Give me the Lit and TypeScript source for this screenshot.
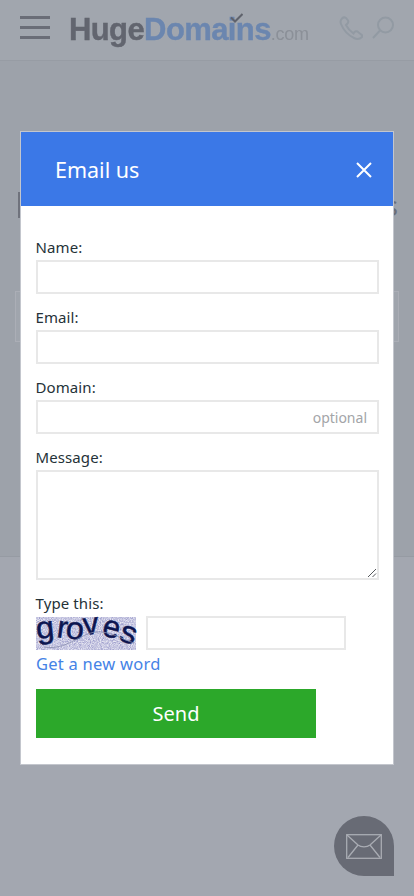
import { LitElement, html, css, svg } from "lit";
import { customElement } from "lit/decorators.js";

const letters = [
  { c: "g", x: 1, y: 22, r: -6, sx: 1.05 },
  { c: "r", x: 20, y: 20, r: 8, sx: 1.0 },
  { c: "o", x: 29, y: 21, r: 6, sx: 1.05 },
  { c: "v", x: 48, y: 18, r: -6, sx: 1.0 },
  { c: "e", x: 65, y: 18, r: 14, sx: 1.0 },
  { c: "s", x: 82, y: 23, r: 18, sx: 1.05 },
];

@customElement("app-root")
export class AppRoot extends LitElement {
  static styles = css`
    :host {
      display: block;
      position: relative;
      width: 414px;
      height: 896px;
      overflow: hidden;
      background: #a3a7b0;
      font-family: "Noto Sans", "Open Sans", sans-serif;
    }
    .page { display: flex; flex-direction: column; height: 896px; }
    .topbar {
      height: 61px;
      flex: none;
      display: flex;
      align-items: center;
      padding: 0 20px;
      box-sizing: border-box;
      background: #a1a6ae;
      border-bottom: 1px solid #979ca4;
    }
    .burger { width: 30px; height: 23px; flex: none; display: flex; flex-direction: column; justify-content: space-between; margin-top: -5px; }
    .burger i { display: block; height: 3px; background: #6a6d77; }
    .logo {
      position: relative;
      margin-left: 19px;
      width: 241px;
      flex: none;
      font-family: "Liberation Sans", Arial, sans-serif;
      font-size: 31px;
      line-height: 40px;
      font-weight: 700;
      letter-spacing: -0.6px;
      white-space: nowrap;
      -webkit-text-stroke: 0.4px currentColor;
      filter: blur(0.35px);
      margin-top: 3px;
    }
    .huge { color: #62656f; }
    .dom { color: #6b86af; }
    .com { color: #8b9098; font-weight: 400; font-size: 18px; letter-spacing: -0.3px; -webkit-text-stroke: 0; }
    .check { position: absolute; left: 161px; top: 3px; width: 13px; height: 10px; }
    .hicons { margin-left: 29px; display: flex; gap: 9px; align-items: center; margin-top: -5px; }
    .main { flex: 1; background: #9da2aa; position: relative; display: flex; flex-direction: column; }
    .ghost-title { height: 28px; margin: 131px 17px 0 18px; display: flex; justify-content: space-between; color: #6b6e78; }
    .ghost-title b { width: 2px; height: 26px; background: #6f727c; }
    .ghost-title span { font-size: 27px; line-height: 28px; margin-right: -1px; }
    .ghost-field { height: 49px; margin: 71px 15px 0; border: 1px solid #abaeb6; background: #a0a5ad; }
    .ghost-line { margin-top: 214px; height: 1px; background: #969ba3; }
    .bottom { flex: 1; background: #a3a7b0; }
    .chat {
      position: absolute;
      left: 334px;
      top: 816px;
      width: 60px;
      height: 60px;
      background: #686b75;
      border-radius: 50% 50% 0 50%;
      display: flex;
      align-items: center;
      justify-content: center;
    }
    .modal {
      position: absolute;
      left: 20px;
      top: 131px;
      width: 374px;
      box-sizing: border-box;
      border: 1px solid #c3c6cd;
      background: #fff;
      color: #253238;
    }
    .mhead {
      height: 74px;
      background: #3b78e7;
      color: #fff;
      display: flex;
      align-items: center;
      justify-content: space-between;
      padding: 0 21px 0 34px;
      font-size: 21.5px;
    }
    .mhead svg { display: block; margin-top: 2px; }
    .mbody { padding: 30px 15px 26px; display: flex; flex-direction: column; }
    label { display: block; font-size: 15px; line-height: 20px; height: 24px; padding-top: 1px; box-sizing: border-box; letter-spacing: 0.1px; margin-left: -0.5px; }
    .box { display: block; height: 34px; width: 343px; box-sizing: border-box; border: 2px solid #e8e8e8; background: #fff; margin-bottom: 12px; }
    .opt { display: flex; align-items: center; justify-content: flex-end; padding-right: 10px; color: #a3a5a8; font-size: 14px; }
    .area { height: 110px; position: relative; }
    .grip { position: absolute; right: 0; bottom: 0; }
    .cap { display: flex; align-items: center; gap: 10px; height: 34px; }
    .cap svg { display: block; flex: none; overflow: visible; }
    .cap .box { width: 200px; margin: 0; }
    .new { color: #4583e6; font-size: 16.5px; line-height: 22px; margin-top: 3px; letter-spacing: 0.25px; text-decoration: none; display: block; }
    .send {
      margin-top: 14px;
      width: 280px;
      height: 49px;
      background: #2ca82a;
      color: #fff;
      font-size: 20px;
      display: flex;
      align-items: center;
      justify-content: center;
    }
  `;

  render() {
    return html`
      <div class="page">
        <div class="topbar">
          <div class="burger"><i></i><i></i><i></i></div>
          <div class="logo">
            <span class="huge">Huge</span><span class="dom">Domains</span><span class="com">.com</span>
            <svg class="check" viewBox="0 0 13 10"><path d="M1 4.5 L5 8.5 L12.5 1" fill="none" stroke="#5f626c" stroke-width="2"/></svg>
          </div>
          <div class="hicons">
            <svg width="24" height="24" viewBox="0 0 24 24" fill="none" stroke="#929aa3" stroke-width="2">
              <path d="M3 2.5 C1.5 4 1 5.5 2 8 C4 13 9 19 15 22 C18 23.5 21 23 23 21 C23.5 20 23 19 22 18.5 L18.5 15.5 C17.5 15 16.5 15 15.5 16 L14.5 17.5 C11 15 8.5 12 7 9 L8.5 7.5 C9.5 6.5 9.5 5.5 9 4.5 L7 2 C5.5 1 4 1.5 3 2.5 Z"/>
            </svg>
            <svg width="22" height="24" viewBox="0 0 22 24" fill="none" stroke="#929aa3" stroke-width="2">
              <circle cx="13.5" cy="9" r="7.5"/><path d="M8 14.5 L1 22"/>
            </svg>
          </div>
        </div>
        <div class="main">
          <div class="ghost-title"><b></b><span>s</span></div>
          <div class="ghost-field"></div>
          <div class="ghost-line"></div>
          <div class="bottom"></div>
        </div>
      </div>
      <div class="chat">
        <svg width="36" height="25" viewBox="0 0 36 25" fill="none" stroke="#a9acb3" stroke-width="1.3">
          <rect x="0.7" y="0.7" width="34.6" height="23.6"/>
          <path d="M1 1 L12 11 C15 13.5 21 13.5 24 11 L35 1"/>
          <path d="M12 11 L2 23.5 M24 11 L34 23.5"/>
        </svg>
      </div>
      <div class="modal">
        <div class="mhead">
          <span>Email us</span>
          <svg width="16" height="16" viewBox="0 0 16 16"><path d="M1 1 L15 15 M15 1 L1 15" stroke="#fff" stroke-width="2"/></svg>
        </div>
        <div class="mbody">
          <label>Name:</label><div class="box"></div>
          <label>Email:</label><div class="box"></div>
          <label>Domain:</label><div class="box opt">optional</div>
          <label>Message:</label>
          <div class="box area">
            <svg class="grip" width="10" height="10" viewBox="0 0 10 10"><path d="M1 9 L9 1 M5.5 9 L9 5.5" stroke="#55585c" stroke-width="1"/></svg>
          </div>
          <label>Type this:</label>
          <div class="cap">
            <svg width="100" height="33" viewBox="0 0 100 33">
              <defs>
                <filter id="noise" x="0" y="0" width="100%" height="100%">
                  <feTurbulence type="fractalNoise" baseFrequency="0.9" numOctaves="2" seed="4"/>
                  <feColorMatrix values="0 0 0 0 0.27  0 0 0 0 0.27  0 0 0 0 0.55  1.6 0 0 0 -0.45"/>
                </filter>
              </defs>
              <rect width="100" height="33" fill="#e6e6f2"/>
              <rect width="100" height="33" filter="url(#noise)"/>
              ${letters.map(
                (l) => svg`<text transform="translate(${l.x} ${l.y}) rotate(${l.r}) scale(${l.sx} 1)" font-family="Liberation Sans, sans-serif" font-size="31" fill="#0c1550" stroke="#0c1550" stroke-width="0.5">${l.c}</text>`
              )}
              <path d="M8 30 C30 34 45 16 60 15 C75 14 85 22 98 26" fill="none" stroke="#8a8fb0" stroke-width="0.8"/>
            </svg>
            <div class="box"></div>
          </div>
          <a class="new">Get a new word</a>
          <div class="send">Send</div>
        </div>
      </div>
    `;
  }
}
